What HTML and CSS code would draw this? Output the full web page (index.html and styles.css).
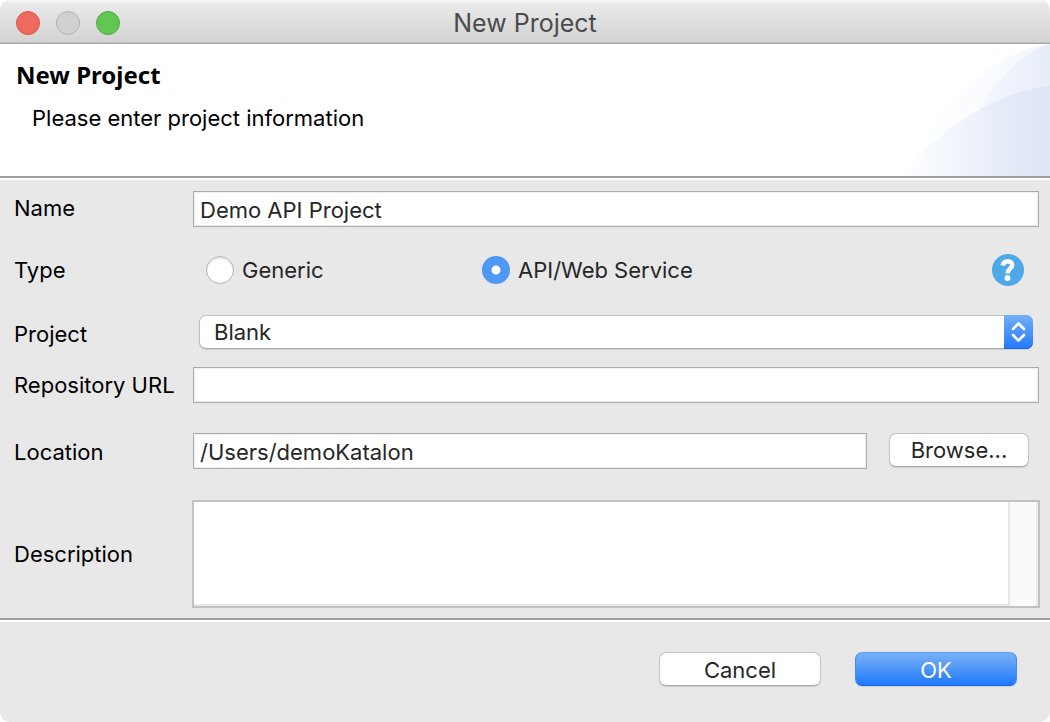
FILE: index.html
```html
<!DOCTYPE html>
<html lang="en">
<head>
<meta charset="utf-8">
<title>New Project</title>
<link rel="stylesheet" href="styles.css">
</head>
<body>
<main class="window">
  <header class="titlebar">
    <div class="lights">
      <button class="light light-close" type="button" aria-label="Close"></button>
      <button class="light light-min" type="button" aria-label="Minimize" disabled></button>
      <button class="light light-zoom" type="button" aria-label="Zoom"></button>
    </div>
    <div class="title">New Project</div>
  </header>
  <section class="banner">
    <div class="banner-text">
      <h1 class="heading">New Project</h1>
      <p class="subheading">Please enter project information</p>
    </div>
    <svg class="swoosh" viewBox="0 0 150 132" aria-hidden="true">
      <defs>
        <linearGradient id="g1" gradientUnits="userSpaceOnUse" x1="10" y1="0" x2="150" y2="0"><stop offset="0" stop-color="#fff"/><stop offset=".5" stop-color="#fafcff"/><stop offset="1" stop-color="#f2f6fd"/></linearGradient>
        <linearGradient id="g2" gradientUnits="userSpaceOnUse" x1="80" y1="0" x2="150" y2="0"><stop offset="0" stop-color="#f4f7fe"/><stop offset="1" stop-color="#e7edf9"/></linearGradient>
        <linearGradient id="g3" gradientUnits="userSpaceOnUse" x1="0" y1="0" x2="150" y2="0"><stop offset="0" stop-color="#fefeff"/><stop offset=".3" stop-color="#f4f8fd"/><stop offset=".7" stop-color="#e5ebf8"/><stop offset="1" stop-color="#dde5f6"/></linearGradient>
      </defs>
      <path d="M4 132C24 82 78 10 150 0V132Z" fill="url(#g1)"/>
      <path d="M76 80C86 42 122 8 150 0V132H76Z" fill="url(#g2)"/>
      <path d="M3 132C32 90 92 48 150 42V132Z" fill="url(#g3)"/>
    </svg>
  </section>
  <form class="form">
    <div class="row row-name">
      <label class="label" for="name">Name</label>
      <input class="field" id="name" type="text" value="Demo API Project">
    </div>
    <div class="row row-type" role="radiogroup" aria-labelledby="type-label">
      <span class="label" id="type-label">Type</span>
      <div class="types">
        <label class="option"><input class="radio" type="radio" name="type">Generic</label>
        <label class="option"><input class="radio" type="radio" name="type" checked>API/Web Service</label>
        <button class="help" type="button" aria-label="Help">
          <svg viewBox="0 0 32 32" width="32" height="32" aria-hidden="true"><circle cx="16" cy="16" r="16" fill="#4fa8e8"/><path d="M10.600 11.500C11.300 8.300 13.200 7.200 15.800 7.200C18.500 7.200 20.200 8.700 20.200 11C20.200 14.800 15.600 14.800 15.600 19.500" fill="none" stroke="#fff" stroke-width="4.400"/><circle cx="15.500" cy="24" r="2.900" fill="#fff"/></svg>
        </button>
      </div>
    </div>
    <div class="row row-project">
      <label class="label" for="project">Project</label>
      <div class="popup">
        <select class="select" id="project"><option>Blank</option></select>
        <svg class="arrows" viewBox="0 0 29 34" aria-hidden="true"><path d="M9 14L14.500 8.500L20 14M9 20L14.500 25.500L20 20" fill="none" stroke="#fff" stroke-width="2.600" stroke-linecap="round" stroke-linejoin="round"/></svg>
      </div>
    </div>
    <div class="row row-repo">
      <label class="label" for="repo">Repository URL</label>
      <input class="field" id="repo" type="text">
    </div>
    <div class="row row-location">
      <label class="label" for="location">Location</label>
      <div class="location">
        <input class="field" id="location" type="text" value="/Users/demoKatalon">
        <button class="button browse" type="button">Browse...</button>
      </div>
    </div>
    <div class="row row-description">
      <label class="label" for="description">Description</label>
      <div class="area">
        <textarea class="textarea" id="description"></textarea>
        <div class="track"></div>
      </div>
    </div>
  </form>
  <footer class="footer">
    <button class="button action" type="button">Cancel</button>
    <button class="button action primary" type="button">OK</button>
  </footer>
</main>
</body>
</html>
```
FILE: styles.css
```css
* { box-sizing: border-box; }
body { margin: 0; background: #fff; font-family: Inter, "Liberation Sans", sans-serif; font-size: 22px; line-height: 28px; color: #000; }
input, button, select, textarea { font: inherit; color: #262626; margin: 0; }
.window { display: flex; flex-direction: column; min-height: 100vh; background: #e8e8e8; border-radius: 10px; overflow: hidden; }

.titlebar { display: grid; grid-template-columns: 1fr auto 1fr; align-items: center; height: 44px; padding: 2px 16px 0; background: linear-gradient(#ececec, #d2d2d2); border-bottom: 1px solid #a8a8a8; box-shadow: inset 0 2px #f5f5f5, inset 0 -1px #c0c0c0; }
.lights { display: flex; gap: 16px; }
.light { width: 24px; height: 24px; padding: 0; border: 1px solid; border-radius: 50%; }
.light-close { background: #ee6a5f; border-color: #d9564c; }
.light-min { background: #d0d0d0; border-color: #b4b4b4; }
.light-zoom { background: #62c554; border-color: #51a843; }
.title { font-size: 25px; color: #4b4b4b; }

.banner { display: flex; justify-content: space-between; height: 136px; padding-bottom: 2px; background: #fff; border-bottom: 2px solid #fff; box-shadow: inset 0 -2px #9d9d9d; }
.banner-text { padding: 17px 16px; }
.heading { margin: 0 0 15px; font-family: "Noto Sans", "Open Sans", sans-serif; font-size: 24px; line-height: 28px; font-weight: 700; }
.subheading { margin: 0 0 0 16px; }
.swoosh { width: 150px; height: 132px; }

.form { display: flex; flex-direction: column; flex: 1; padding: 11px 11px 10px 14px; }
.row { display: grid; grid-template-columns: 179px minmax(0, 1fr); align-items: center; }
.row-name { margin-bottom: 27px; }
.row-type { margin-bottom: 29px; }
.row-project { margin-bottom: 18px; }
.row-repo { margin-bottom: 30px; }
.row-location { margin-bottom: 31px; }
.row-description { flex: 1; }
.row-project .label { padding-top: 4px; }
.row-location .label { padding-top: 2px; }
.row-name .label { padding-bottom: 2px; }
.label { white-space: nowrap; }
.field { width: 100%; min-width: 0; height: 36px; padding: 2px 6px 0; background: #fff; border: 1px solid #ababab; border-radius: 0; box-shadow: inset 0 0 0 1px #f0f0f0; }
.types { display: grid; grid-template-columns: 276px 1fr auto; align-items: center; padding: 0 15px 0 13px; }
.option { display: flex; align-items: center; gap: 8px; color: #262626; }
.radio { appearance: none; width: 28px; height: 28px; border-radius: 50%; background: #fff; border: 1px solid #b5b5b5; box-shadow: inset 0 2px 2px #e8e8e8; }
.radio:checked { border: 0; box-shadow: none; background: radial-gradient(circle, #fff 4px, #4f97f6 5px); }
.help { display: block; width: 32px; height: 32px; padding: 0; border: 0; background: none; }
.help svg { display: block; }
.popup { position: relative; margin: 0 6px; height: 34px; border-radius: 7px; }
.select { appearance: none; display: block; width: 100%; height: 34px; padding: 0 40px 0 14px; border: 1px solid #c0c0c0; border-bottom-color: #a8a8a8; border-radius: 7px; background: #fff; box-shadow: 0 1px 1px #d0d0d0; }
.arrows { position: absolute; top: 0; right: 0; width: 29px; height: 34px; border-radius: 0 7px 7px 0; background: linear-gradient(#73b0f7, #2179fc); box-shadow: inset 0 -1px #1464f0; pointer-events: none; }
.location { display: flex; align-items: flex-start; gap: 22px; }
.button { height: 34px; padding: 2px 0 0; border: 1px solid #c2c2c2; border-bottom-color: #a8a8a8; border-radius: 7px; background: #fff; box-shadow: 0 1px 1px #d0d0d0; line-height: 30px; white-space: nowrap; }
.browse { flex: 0 0 140px; margin-right: 10px; padding: 0; }
.area { display: flex; align-self: stretch; margin: 0 -1px; min-height: 108px; border: 2px solid #c2c2c2; background: #fafafa; }
.textarea { flex: 1; display: block; min-width: 0; resize: none; border: 0 solid #e8e8e8; border-width: 0 2px 2px 0; border-radius: 0; background: #fff; padding: 2px 6px; }
.track { width: 28px; border-right: 2px solid #ebebeb; }

.footer { display: flex; justify-content: flex-end; gap: 34px; height: 104px; padding: 32px 33px 0; border-top: 2px solid #9d9d9d; box-shadow: inset 0 2px #fff; }
.action { width: 162px; }
.primary { color: #fff; border-color: #5b9cf3 #4489f4 #1464f0; background: linear-gradient(#78b2f5, #2179fc); }
```
